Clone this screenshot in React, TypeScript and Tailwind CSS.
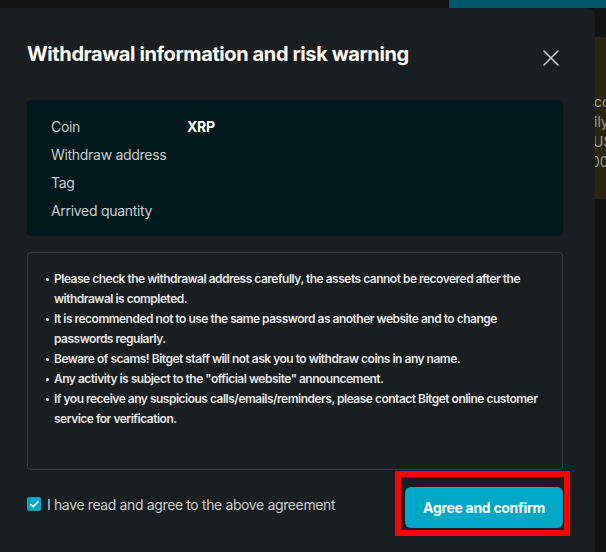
import { Check } from "lucide-react";

const warnings = [
  "Please check the withdrawal address carefully, the assets cannot be recovered after the withdrawal is completed.",
  "It is recommended not to use the same password as another website and to change passwords regularly.",
  "Beware of scams! Bitget staff will not ask you to withdraw coins in any name.",
  'Any activity is subject to the "official website" announcement.',
  "If you receive any suspicious calls/emails/reminders, please contact Bitget online customer service for verification.",
];

const rows = [
  { label: "Coin", value: "XRP" },
  { label: "Withdraw address", value: "" },
  { label: "Tag", value: "" },
  { label: "Arrived quantity", value: "" },
];

export default function App() {
  return (
    <div className="relative h-[552px] w-[606px] overflow-hidden bg-[#121212] font-['Inter',sans-serif]">
      {/* page behind the dialog */}
      <div className="ml-[449px] h-2 w-[157px] bg-[#015a69]" />
      <div className="ml-[595px] mt-[29px] h-[162px] overflow-hidden bg-[#29250f] pt-[55px] text-[14px] leading-5 text-[#9b9a94]">
        <div className="-ml-[1px]">count</div>
        <div className="-ml-[1px]">ily</div>
        <div className="-ml-[2px]">USDT</div>
        <div className="-ml-[4px]">000</div>
      </div>

      <div className="absolute left-[-5px] top-2 h-[560px] w-[600px] rounded-lg bg-[#1b1e20] px-8">
        <div className="flex items-center justify-between pt-[34px]">
          <h2 className="text-[20px] font-bold leading-6 tracking-[-0.4px] text-white">
            Withdrawal information and risk warning
          </h2>
          <svg width="16" height="16" viewBox="0 0 16 16" className="mr-[4px] mt-[7px] text-[#cfd1d3]">
            <path d="M1 1L15 15M15 1L1 15" stroke="currentColor" strokeWidth="1.5" strokeLinecap="round" />
          </svg>
        </div>

        <div className="mt-[34px] rounded bg-[#01181c] py-3 pl-6">
          {rows.map((r) => (
            <div key={r.label} className="flex h-7 items-center text-[14px] tracking-[-0.3px]">
              <span className="w-[136px] text-[#c9cbcd]">{r.label}</span>
              <span className="font-bold text-white">{r.value}</span>
            </div>
          ))}
        </div>

        <div className="mt-4 h-[218px] rounded border border-[#393c3f] pl-[18px] pr-4 pt-4">
          {warnings.map((w) => (
            <div key={w} className="flex text-[12px] font-semibold leading-5 tracking-[-0.5px] text-[#e6e7e8]">
              <span className="mr-[5px] mt-[9px] h-[3px] w-[3px] shrink-0 rounded-full bg-[#e6e7e8]" />
              <span>{w}</span>
            </div>
          ))}
        </div>

        <div className="mt-[17px] flex items-center justify-between">
          <label className="mb-[7px] flex items-center gap-[6px] text-[14px] tracking-[-0.37px] text-[#c9cbcd]">
            <span className="flex h-[14px] w-[14px] items-center justify-center rounded-[2px] bg-[#00a7c4]">
              <Check size={11} strokeWidth={3.5} className="text-white" />
            </span>
            I have read and agree to the above agreement
          </label>
          <div className="relative">
            <button className="h-[41px] w-[158px] rounded-md bg-[#00a8c6] text-[14px] font-bold tracking-[-0.3px] text-white">
              Agree and confirm
            </button>
            <div className="absolute -bottom-[8px] -left-[10px] -right-[7px] -top-[16px] border-[6px] border-[#ff0000]" />
          </div>
        </div>
      </div>
    </div>
  );
}
